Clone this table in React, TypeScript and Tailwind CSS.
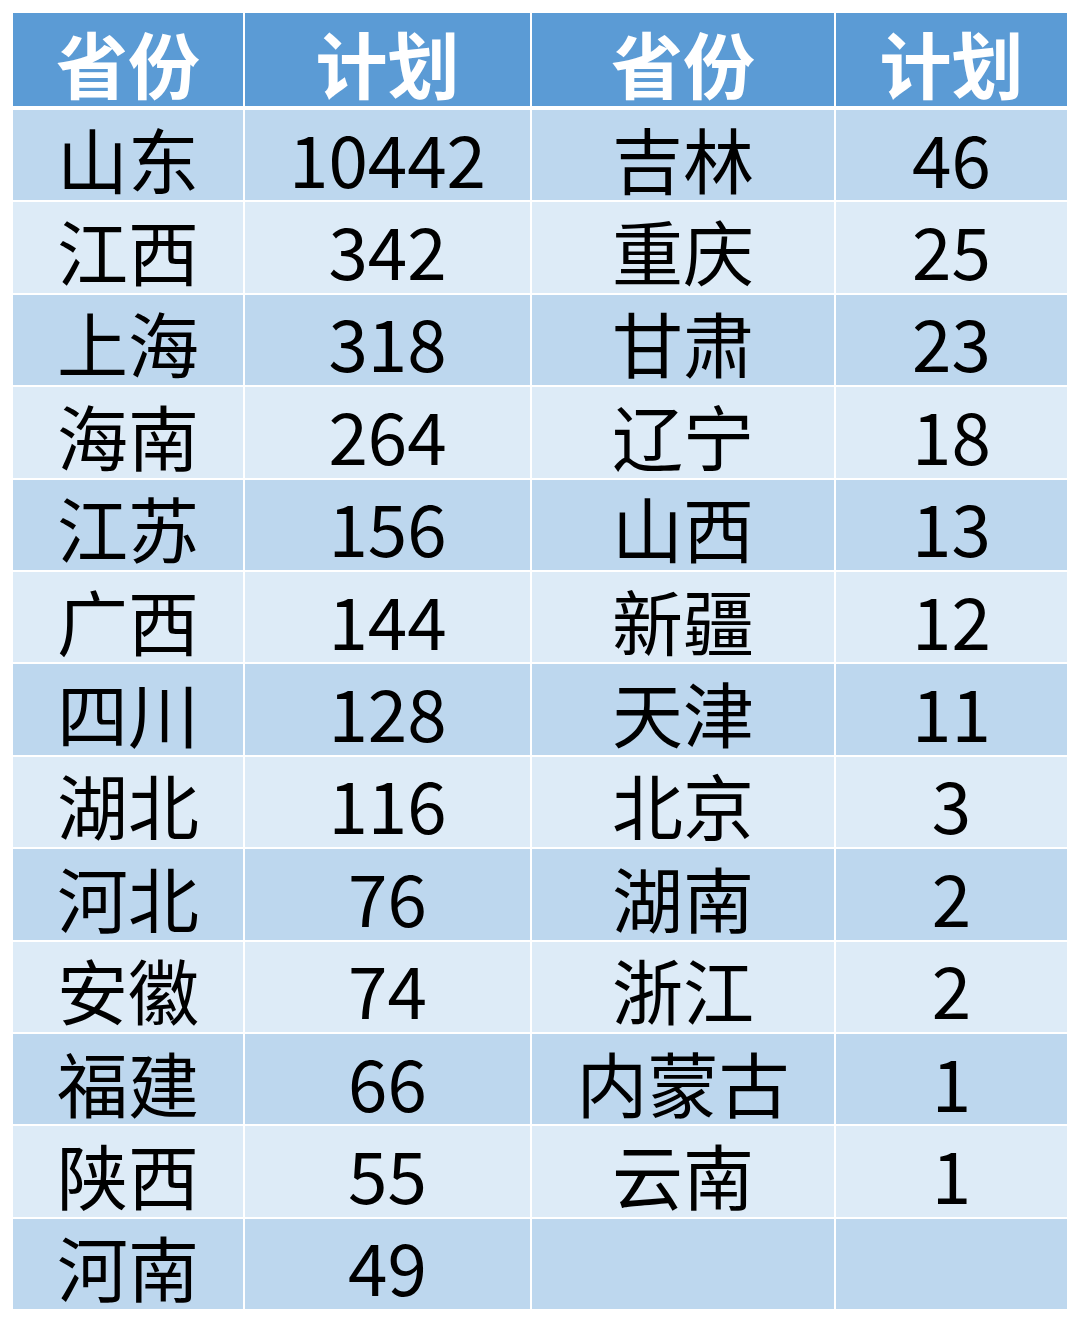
const rows: [string, string, string, string][] = [
  ['山东', '10442', '吉林', '46'],
  ['江西', '342', '重庆', '25'],
  ['上海', '318', '甘肃', '23'],
  ['海南', '264', '辽宁', '18'],
  ['江苏', '156', '山西', '13'],
  ['广西', '144', '新疆', '12'],
  ['四川', '128', '天津', '11'],
  ['湖北', '116', '北京', '3'],
  ['河北', '76', '湖南', '2'],
  ['安徽', '74', '浙江', '2'],
  ['福建', '66', '内蒙古', '1'],
  ['陕西', '55', '云南', '1'],
  ['河南', '49', '', ''],
];

const font = { fontFamily: '"Noto Sans CJK SC", "Noto Sans", sans-serif' };

export default function App() {
  return (
    <div className="w-[1080px] h-[1321px] bg-white pt-[13px] pl-[13px]" style={font}>
      <div className="grid grid-cols-[230px_285px_302px_231px] gap-x-[2px] w-[1054px]">
        {['省份', '计划', '省份', '计划'].map((h, i) => (
          <div
            key={i}
            className="h-[93px] bg-[#5b9bd5] flex items-center justify-center pt-[4px] text-white font-bold text-[72px] leading-none"
          >
            {h}
          </div>
        ))}
      </div>
      <div className="h-[4px]" />
      <div className="flex flex-col gap-y-[2px] w-[1054px]">
        {rows.map((r, i) => (
          <div key={i} className="grid grid-cols-[230px_285px_302px_231px] gap-x-[2px] h-[90.4px]">
            {r.map((c, j) => (
              <div
                key={j}
                className={
                  'flex items-center justify-center pt-[4px] text-[71px] leading-none text-black ' +
                  (i % 2 === 0 ? 'bg-[#bdd7ee]' : 'bg-[#ddebf7]')
                }
              >
                {c}
              </div>
            ))}
          </div>
        ))}
      </div>
    </div>
  );
}
